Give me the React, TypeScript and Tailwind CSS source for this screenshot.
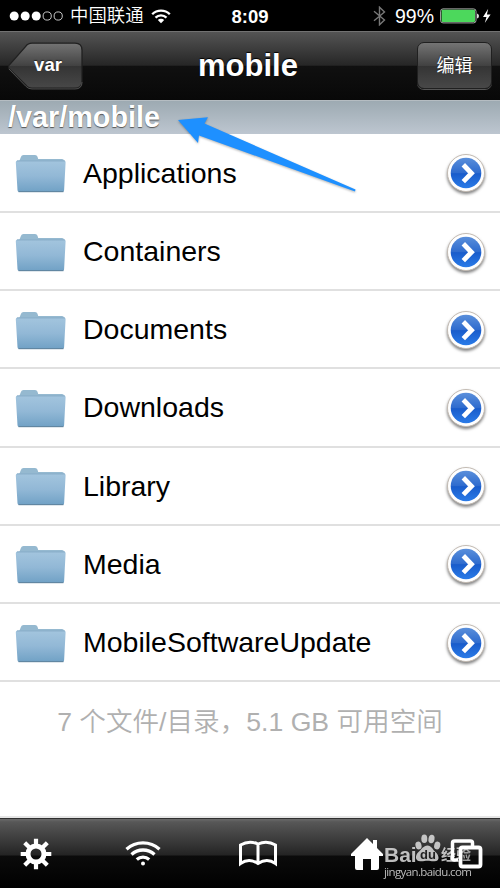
import React from 'react';

const folders = [
    'Applications',
    'Containers',
    'Documents',
    'Downloads',
    'Library',
    'Media',
    'MobileSoftwareUpdate',
];

const StatusBar: React.FC = () => (
    <div className="relative flex h-[31px] shrink-0 items-center bg-black text-white">
        <svg className="ml-[9px] h-[12px] w-[55px]" viewBox="0 0 55 12">
            <g fill="#fff">
                <circle cx="5.2" cy="6" r="4.5" />
                <circle cx="16.2" cy="6" r="4.5" />
                <circle cx="27.2" cy="6" r="4.5" />
            </g>
            <g fill="none" stroke="#ddd" strokeWidth="0.9">
                <circle cx="38.2" cy="6" r="4.1" />
                <circle cx="49.2" cy="6" r="4.1" />
            </g>
        </svg>
        <span className="ml-[6px] w-[74px] whitespace-nowrap pt-px font-['Liberation_Sans','Noto_Sans_CJK_SC',sans-serif] text-[18.4px] leading-[30px] font-[350]">中国联通</span>
        <svg className="ml-[7px] h-[16px] w-[20px]" viewBox="0 0 20 16">
            <g fill="none" stroke="#fff" strokeWidth="2.3">
                <path d="M1.2 6.2a12.4 12.4 0 0 1 17.6 0" />
                <path d="M4.5 9.6a7.8 7.8 0 0 1 11 0" />
            </g>
            <path d="M10 15.2 6.8 12a4.5 4.5 0 0 1 6.4 0z" fill="#fff" />
        </svg>
        <span className="absolute inset-x-0 top-0 text-center text-[18.5px] leading-[33px] font-bold">8:09</span>
        <svg className="ml-auto h-[20px] w-[13px]" viewBox="0 0 13 20">
            <path d="m1 5.2 10.5 8.8L6.5 18.8V1.2L11.5 6 1 14.8" fill="none" stroke="#777" strokeWidth="1.4" />
        </svg>
        <span className="ml-[9px] w-[40px] whitespace-nowrap text-[19.5px] leading-[32px]">99%</span>
        <svg className="mr-[9px] ml-[5px] h-[16px] w-[51px]" viewBox="0 0 51 16">
            <rect x="0.6" y="0.9" width="35.4" height="14" rx="2.4" fill="none" stroke="#bbb" strokeWidth="0.9" />
            <rect x="1.600" y="1.800" width="33.400" height="12.200" rx="1" fill="#4cd85c" />
            <path d="M37 5.5q2 .5 2 2.5t-2 2.5z" fill="#ddd" />
            <path d="M48.2.8 43 8.9h3.5l-1.7 6 5.8-8.3h-3.7z" fill="#fff" />
        </svg>
    </div>
);

const NavBar: React.FC = () => (
    <div className="relative flex h-[69px] shrink-0 items-start justify-between border-t border-[#727272] bg-[linear-gradient(180deg,#545454_0%,#262626_49%,#101010_50%,#080808_100%)] px-2 pt-[10px] text-white">
        <div className="relative h-[48px] w-[75px]">
            <svg className="absolute inset-0 h-[48px] w-[75px]" viewBox="0 0 75 48">
                <defs>
                    <linearGradient id="back" x2="0" y2="1">
                        <stop offset="0" stopColor="#747474" />
                        <stop offset="0.5" stopColor="#424242" />
                        <stop offset="0.51" stopColor="#343434" />
                        <stop offset="1" stopColor="#484848" />
                    </linearGradient>
                </defs>
                <path d="M24 1.2h43q7 0 7 7v31q0 7-7 7H24q-4 0-6.500-3.500L.8 26.500Q0 25 .8 23.500L17.500 4.700Q20 1.200 24 1.200z" fill="url(#back)" stroke="#202020" strokeWidth="1.300" />
                <path d="M1 27 17.500 44q2.500 3 6.500 3h43q7 0 7-7" fill="none" stroke="#666" strokeWidth="0.700" />
            </svg>
            <span className="relative block pl-[5px] text-center text-[18.500px] leading-[45px] font-bold [text-shadow:0_-1px_1px_#222]">var</span>
        </div>
        <h1 className="absolute inset-x-0 top-[14px] pr-1 text-center text-[31px] leading-[40px] font-bold [text-shadow:0_-1px_1px_#000]">mobile</h1>
        <div className="h-[47px] w-[75px] rounded-[7px] border border-[#202020] bg-[linear-gradient(180deg,#747474_0%,#424242_50%,#343434_51%,#484848_100%)] text-center font-['Noto_Sans_CJK_SC',sans-serif] text-[18px] leading-[43px] shadow-[0_1px_0_#555] [text-shadow:0_-1px_1px_#222]">
            编辑
        </div>
    </div>
);

const FolderIcon: React.FC = () => (
    <svg className="mt-[3px] h-[42px] w-[52px]" viewBox="0 0 52 42">
        <defs>
            <linearGradient id="folder" x2="0" y2="1">
                <stop offset="0" stopColor="#a3c5de" />
                <stop offset="0.5" stopColor="#92b8d6" />
                <stop offset="1" stopColor="#70a1c5" />
            </linearGradient>
        </defs>
        <path d="M4.500 7.500 6 3.800Q6.500 2 8.500 2h11.500q2 0 2.500 1.800l.700 2.200H47q2 0 2 2v2H3z" fill="#95b9d0" />
        <path d="M.8 9.200Q.7 7.500 2.500 7.500H49q1.700 0 1.600 1.700L49.100 37.200q-.1 1.800-1.600 1.800H4.200q-1.600 0-1.700-1.800z" fill="url(#folder)" />
        <path d="M2 7.900H50" stroke="#7ea5c0" strokeWidth="0.800" />
        <path d="M3.500 38.700H48.500" stroke="#5e809a" strokeWidth="1" />
    </svg>
);

const DisclosureIcon: React.FC = () => (
    <svg className="mt-[3px] h-[46px] w-[44px] overflow-visible" viewBox="0 0 44 46">
        <defs>
            <linearGradient id="disc" x2="0" y2="1">
                <stop offset="0" stopColor="#5a8fdb" />
                <stop offset="0.500" stopColor="#2e6bce" />
                <stop offset="0.520" stopColor="#195ccb" />
                <stop offset="1" stopColor="#2a7be8" />
            </linearGradient>
        </defs>
        <circle cx="22" cy="22" r="18.500" fill="#fff" stroke="#c3bbb3" strokeWidth="1" className="drop-shadow-[0_2px_1.5px_rgba(0,0,0,0.5)]" />
        <circle cx="22" cy="22" r="15.300" fill="url(#disc)" />
        <path d="m19.300 13.800 8.200 8.400-8.200 8.400" fill="none" stroke="#fff" strokeWidth="4.800" />
    </svg>
);

const FolderRow: React.FC<{ name: string }> = ({ name }) => (
    <div className="flex h-[78.2px] items-center border-b-2 border-[#e0e0e0] pr-[12px] pl-[15px]">
        <FolderIcon />
        <span className="ml-4 flex-1 text-[28.5px] leading-[36px] text-black">{name}</span>
        <DisclosureIcon />
    </div>
);

const Watermark: React.FC = () => (
    <div className="absolute top-[14px] left-[384px] h-[46px] w-[92px] text-[#ddd] opacity-85">
        <span className="absolute top-[9px] left-0 text-[21px] leading-[26px] font-bold">Bai</span>
        <svg className="absolute top-0 left-[30px] h-[30px] w-[28px]" viewBox="0 0 28 30">
            <g fill="#ddd">
                <ellipse cx="4.500" cy="12.500" rx="3" ry="4" transform="rotate(-15 4.500 12.500)" />
                <ellipse cx="10.300" cy="5.800" rx="3" ry="4.300" />
                <ellipse cx="17.500" cy="6" rx="3" ry="4.300" transform="rotate(10 17.500 6)" />
                <ellipse cx="23.200" cy="12.500" rx="3" ry="4" transform="rotate(15 23.200 12.500)" />
                <path d="M13.500 12.500c4 0 5 4 8 6.500 3.500 3 5 9-1 9.300-3 .2-4.500-.5-7-.5s-4.500.7-7 .5c-6-.3-5.500-6-2-9.300 3-2.500 5-6.500 9-6.500z" />
            </g>
        </svg>
        <span className="absolute top-[15px] left-[36px] text-[13px] leading-[14px] font-bold text-[#222]">du</span>
        <span className="absolute top-[11px] left-[57px] font-['Noto_Sans_CJK_SC',sans-serif] text-[15px] leading-[20px] font-bold whitespace-nowrap">经验</span>
        <span className="absolute top-[31px] left-0 font-['Open_Sans',sans-serif] text-[11.500px] leading-[16px] tracking-[-0.62px]">jingyan.baidu.com</span>
    </div>
);

const TabBar: React.FC = () => (
    <div className="relative flex h-[70px] shrink-0 items-start border-t border-[#303030] bg-[linear-gradient(180deg,#6b6b6b_0px,#575757_3px,#242424_36px,#0b0b0b_37px,#000_69px)]">
        {/* settings */}
        <svg className="mt-[19px] ml-[20px] h-[32px] w-[32px]" viewBox="-16 -16 32 32">
            <circle r="8" fill="none" stroke="#fff" strokeWidth="5" />
            <g stroke="#fff" strokeWidth="4.200">
                <path d="M0-9V-15.300M0 9V15.300M-9 0H-15.300M9 0H15.300" />
                <path d="m-6.500-6.500-4.800-4.800M6.500-6.500l4.800-4.800M-6.500 6.500l-4.800 4.800M6.500 6.500l4.800 4.800" />
            </g>
        </svg>
        {/* wifi */}
        <svg className="mt-[21px] ml-[73px] h-[28px] w-[36px]" viewBox="0 0 36 28">
            <g fill="none" stroke="#fff" strokeWidth="3.300">
                <path d="M1.500 9.300a24.500 24.500 0 0 1 33 0" />
                <path d="M6.500 14.500a17 17 0 0 1 23 0" />
                <path d="M11.800 19.500a9.200 9.200 0 0 1 12.400 0" />
            </g>
            <circle cx="18" cy="23.500" r="2" fill="#fff" />
        </svg>
        {/* bookmarks */}
        <svg className="mt-[20px] ml-[77px] h-[28px] w-[40px]" viewBox="0 0 40 28">
            <path d="M2.500 24.500V6Q11 1 20 5 29 1 37.500 6V24.500Q29 18.500 20 24.500 11 18.500 2.500 24.500zM20 5V25" fill="none" stroke="#fff" strokeWidth="3" />
        </svg>
        {/* home */}
        <svg className="mt-[18px] ml-[73px] h-[34px] w-[32px]" viewBox="0 0 32 34">
            <path d="m16 1 6 6V3h4v8l6 6v2h-4v12q0 2-2 2h-6V22h-8v11H6q-2 0-2-2V19H0v-2z" fill="#fff" />
        </svg>
        <Watermark />
        {/* windows */}
        <svg className="relative mt-[19px] ml-[66px] h-[33px] w-[34px]" viewBox="0 0 34 33">
            <path d="M9 22H5.500q-2 0-2-2V5q0-2 2-2H21.500q2 0 2 2V9" fill="none" stroke="#fff" strokeWidth="3.500" />
            <rect x="11.500" y="9.500" width="20" height="19" rx="2" fill="#111" fillOpacity="0.200" stroke="#fff" strokeWidth="3.800" />
        </svg>
    </div>
);

const App: React.FC = () => {
    return (
        <div className="relative flex h-[888px] w-[500px] flex-col overflow-hidden bg-white font-['Liberation_Sans','Noto_Sans_CJK_SC',sans-serif]">
            <StatusBar />
            <NavBar />

            {/* Current path */}
            <div className="h-[34px] shrink-0 border-t border-[#b5bdc2] bg-linear-to-b from-[#9daab2] to-[#bdc6d0] pl-2 text-[28.800px] leading-[33px] font-bold text-white [text-shadow:0_1px_1px_#555]">
                /var/mobile
            </div>

            <div className="shrink-0 pt-[0.8px]">
                {folders.map((name) => (
                    <FolderRow key={name} name={name} />
                ))}
            </div>

            <div className="flex-1 border-b-2 border-[#e6e6e6] pt-[22px] text-center text-[26.600px] leading-[36px] font-[350] whitespace-nowrap text-[#b0b0b0]">
                7 个文件/目录，5.1 GB 可用空间
            </div>

            <TabBar />

            {/* Pointer to the path bar */}
            <svg className="absolute top-[112px] left-[174px] h-[84px] w-[188px] drop-shadow-[0_1px_1px_rgba(0,0,0,0.3)]" viewBox="174 112 188 84">
                <path d="M178 120 208 117.300 204.500 123.500 355.500 189.500 355 191.500 199 135.500 198 143z" fill="#1e90ff" />
            </svg>
        </div>
    );
};

export default App;
